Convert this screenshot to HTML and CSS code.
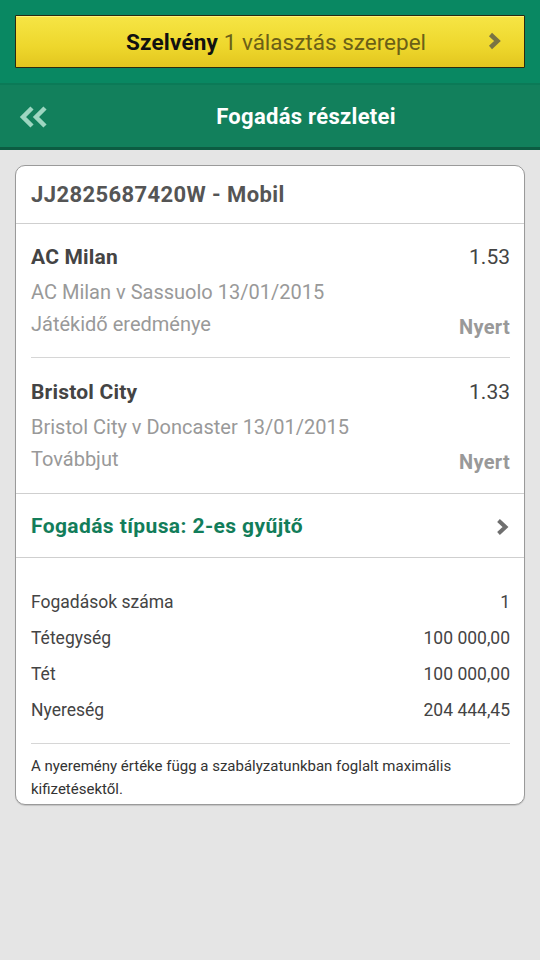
FILE: index.html
```html
<!DOCTYPE html>
<html lang="hu">
<head>
    <meta charset="UTF-8">
    <meta name="viewport" content="width=device-width, initial-scale=1.0">
    <title>Fogadás részletei</title>
    <link rel="stylesheet" href="styles.css">
</head>
<body>
    <div class="slip-bar">
        <button class="slip-button">
            <span class="slip-text"><b>Szelvény</b> 1 választás szerepel</span>
            <svg class="chevron" width="14" height="18" viewBox="0 0 14 18">
                <path d="M2.5 2.5 L9.5 9 L2.5 15.5" fill="none" stroke="currentColor" stroke-width="4.5"/>
            </svg>
        </button>
    </div>

    <div class="title-bar">
        <svg class="back" width="30" height="24" viewBox="0 0 30 24">
            <path d="M14 3 L5 12 L14 21 M27 3 L18 12 L27 21" fill="none" stroke="currentColor" stroke-width="4.5"/>
        </svg>
        <h1>Fogadás részletei</h1>
    </div>

    <div class="content">
        <div class="card">
            <div class="card-head">JJ2825687420W - Mobil</div>

            <div class="selections">
                <div class="selection">
                    <div class="sel-top">
                        <span class="sel-name">AC Milan</span>
                        <span class="sel-odds">1.53</span>
                    </div>
                    <div class="sel-event">AC Milan v Sassuolo 13/01/2015</div>
                    <div class="sel-bottom">
                        <span class="sel-market">Játékidő eredménye</span>
                        <span class="sel-result">Nyert</span>
                    </div>
                </div>
                <div class="selection">
                    <div class="sel-top">
                        <span class="sel-name">Bristol City</span>
                        <span class="sel-odds">1.33</span>
                    </div>
                    <div class="sel-event">Bristol City v Doncaster 13/01/2015</div>
                    <div class="sel-bottom">
                        <span class="sel-market">Továbbjut</span>
                        <span class="sel-result">Nyert</span>
                    </div>
                </div>
            </div>

            <div class="bet-type">
                <span>Fogadás típusa: 2-es gyűjtő</span>
                <svg class="chevron" width="14" height="18" viewBox="0 0 14 18">
                    <path d="M2.5 2.5 L9.5 9 L2.5 15.5" fill="none" stroke="currentColor" stroke-width="4"/>
                </svg>
            </div>

            <div class="summary">
                <div class="sum-rows">
                    <div class="sum-row"><span>Fogadások száma</span><span>1</span></div>
                    <div class="sum-row"><span>Tétegység</span><span>100 000,00</span></div>
                    <div class="sum-row"><span>Tét</span><span>100 000,00</span></div>
                    <div class="sum-row"><span>Nyereség</span><span>204 444,45</span></div>
                </div>
                <p class="note">A nyeremény értéke függ a szabályzatunkban foglalt maximális kifizetésektől.</p>
            </div>
        </div>
    </div>
</body>
</html>
```

FILE: styles.css
```css
body {
    margin: 0;
    font-family: Roboto, "Noto Sans", sans-serif;
    background-color: #e5e5e5;
    min-height: 100vh;
}

/* Felső sáv a szelvény gombbal */
.slip-bar {
    background-color: #098862;
    padding: 15px;
    border-bottom: 2px solid #0b7a57;
}

.slip-button {
    display: flex;
    align-items: center;
    justify-content: center;
    position: relative;
    width: 100%;
    height: 53px;
    border: 1px solid #2b2a10;
    border-radius: 1px;
    background: linear-gradient(#f6e545, #eed72c 60%, #e2c61f);
    box-shadow: inset 0 1px 0 #fff27a;
    font-family: inherit;
    padding: 0;
}

.slip-text {
    font-size: 22.5px;
    color: #6b6017;
    margin-left: 12px;
}

.slip-text b {
    color: #111;
    font-weight: 700;
    letter-spacing: 0.2px;
}

.slip-button .chevron {
    position: absolute;
    right: 22px;
    top: 16px;
    color: #7a7443;
}

/* Cím sáv */
.title-bar {
    display: flex;
    align-items: center;
    height: 62px;
    background-color: #12805c;
    border-bottom: 3px solid #0c5c42;
    position: relative;
}

.back {
    position: absolute;
    left: 18px;
    top: 20px;
    color: #9dd6c1;
}

.title-bar h1 {
    flex: 1;
    margin: 0;
    text-align: center;
    font-size: 22px;
    font-weight: 700;
    letter-spacing: 0.3px;
    color: #fff;
    padding-left: 72px;
}

.content {
    padding: 15px;
}

.card {
    background-color: #fff;
    border: 1px solid #9a9a9a;
    border-radius: 10px;
    box-shadow: 0 1px 1px rgba(0, 0, 0, 0.15);
    overflow: hidden;
}

.card-head {
    height: 57px;
    line-height: 57px;
    padding: 0 15px;
    font-size: 22px;
    font-weight: 700;
    letter-spacing: 0.4px;
    color: #555;
    border-bottom: 1px solid #cfcfcf;
}

.selections {
    border-bottom: 1px solid #cfcfcf;
}

.selection {
    margin: 0 14px 0 15px;
    padding: 18px 0 17px;
}

.selection + .selection {
    border-top: 1px solid #d6d6d6;
    padding: 19px 0 18px;
}

.sel-top,
.sel-bottom {
    display: flex;
    justify-content: space-between;
}

.sel-top {
    line-height: 30px;
    font-size: 21px;
}

.sel-name {
    font-weight: 700;
    color: #444;
    letter-spacing: 0.2px;
}

.sel-odds {
    color: #444;
}

.sel-event {
    margin-top: 4px;
    line-height: 32px;
    font-size: 20px;
    color: #999;
}

.sel-bottom {
    align-items: baseline;
    line-height: 32px;
}

.sel-market {
    font-size: 20px;
    color: #999;
}

.sel-result {
    font-size: 20px;
    font-weight: 700;
    letter-spacing: 0.3px;
    color: #999;
    position: relative;
    top: 3px;
}

.bet-type {
    display: flex;
    justify-content: space-between;
    align-items: center;
    height: 63px;
    padding: 0 14px 0 15px;
    font-size: 21px;
    font-weight: 700;
    letter-spacing: 0.4px;
    color: #127d5a;
    border-bottom: 1px solid #cfcfcf;
}

.bet-type .chevron {
    color: #6f6f6f;
    margin-top: 3px;
}

.summary {
    margin: 0 14px 0 15px;
    padding: 26px 0 3px;
}

.sum-rows {
    padding-bottom: 15px;
    border-bottom: 1px solid #d6d6d6;
}

.sum-row {
    display: flex;
    justify-content: space-between;
    height: 36px;
    line-height: 36px;
    font-size: 17.5px;
    color: #444;
}

.note {
    margin: 0;
    padding-top: 11px;
    font-size: 15px;
    line-height: 23px;
    color: #333;
}
```
